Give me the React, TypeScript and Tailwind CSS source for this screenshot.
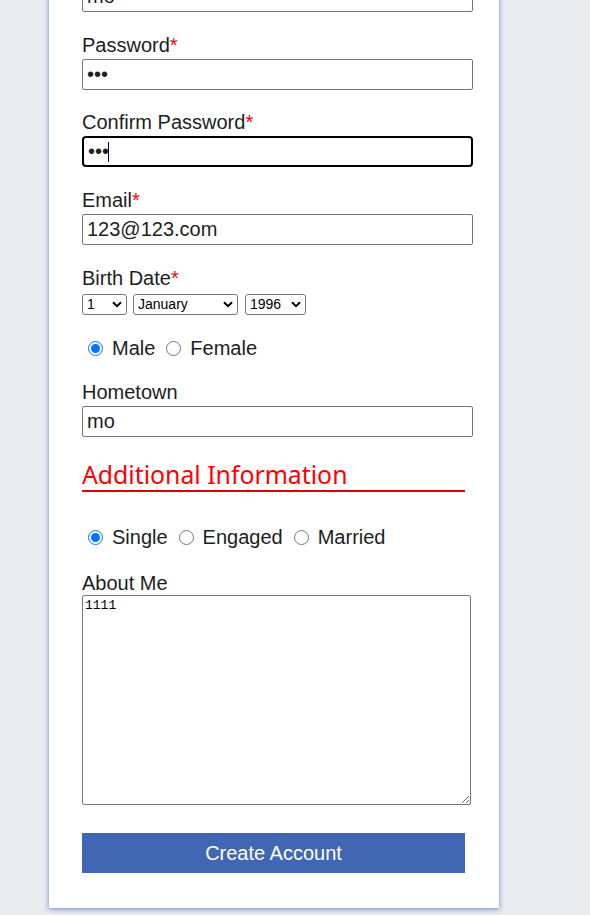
import React from "react";

const Label = ({ text, req }: { text: string; req?: boolean }) => (
  <label className="block text-[20px] leading-[23px] text-[#1c1e21]">
    {text}
    {req && <span className="text-[#ff0000]">*</span>}
  </label>
);

const inputCls =
  "block w-[391px] h-[31px] border border-[#767676] rounded-[2px] px-[4px] text-[20px] leading-[23px] text-[#1c1e21] bg-white box-border";

const Radio = ({ checked, name, label, first }: { checked?: boolean; name: string; label: string; first?: boolean }) => (
  <span className="inline-flex items-center">
    <input
      type="radio"
      name={name}
      defaultChecked={checked}
      className={`w-[15px] h-[15px] m-0 ${first ? "ml-[6px]" : "ml-[11px]"} mr-[9px] accent-[#0075ff]`}
    />
    <span className="text-[20px] leading-[23px] text-[#1c1e21]">{label}</span>
  </span>
);

const Select = ({ value, cls }: { value: string; cls: string }) => (
  <div className={`relative block h-[21px] ${cls}`}>
    <select
      className="block appearance-none w-full h-[21px] border border-[#767676] rounded-[3px] text-[14px] leading-[19px] text-black bg-white pl-[4px] pr-[18px]"
      defaultValue={value}
    >
      <option value={value}>{value}</option>
    </select>
    <svg className="absolute right-[5px] top-[7px] pointer-events-none" width="10" height="7" viewBox="0 0 10 7">
      <path d="M1 1.2 L5 5.2 L9 1.2" fill="none" stroke="#000" strokeWidth="2" />
    </svg>
  </div>
);

export default function App() {
  return (
    <div className="min-h-[915px] bg-[#e9ebee] overflow-hidden" style={{ fontFamily: '"Liberation Sans", Arial, sans-serif' }}>
      <div className="ml-[49px] w-[450px] bg-white -mt-[60px] pt-[41px] pb-[35px] pl-[33px] pr-[34px] shadow-[0_1px_5px_rgba(66,103,178,0.75)]">
        <input className={inputCls} defaultValue="mo" />

        <div className="mt-[22px]">
          <Label text="Password" req />
          <input type="password" className={`${inputCls} mt-[2px]`} defaultValue="123" />
        </div>

        <div className="mt-[21px]">
          <Label text="Confirm Password" req />
          <div className="relative mt-[2px]">
            <input type="password" className={`${inputCls} border-2 border-black rounded-[4px] px-[3px]`} defaultValue="123" />
            <span className="absolute left-[26px] top-[6px] w-[1px] h-[20px] bg-black" />
          </div>
        </div>

        <div className="mt-[22px]">
          <Label text="Email" req />
          <input className={`${inputCls} mt-[2px]`} defaultValue="123@123.com" />
        </div>

        <div className="mt-[22px]">
          <Label text="Birth Date" req />
          <div className="flex h-[21px] mt-[4px]">
            <Select value="1" cls="w-[45px]" />
            <Select value="January" cls="w-[105px] ml-[6px]" />
            <Select value="1996" cls="w-[61px] ml-[7px]" />
          </div>
        </div>

        <div className="mt-[22px] flex items-center h-[23px]">
          <Radio name="g" label="Male" checked first />
          <Radio name="g" label="Female" />
        </div>

        <div className="mt-[21px]">
          <Label text="Hometown" />
          <input className={`${inputCls} mt-[2px]`} defaultValue="mo" />
        </div>

        <h2
          className="mt-[21px] text-[24.8px] leading-[32px] text-[#ff0000] border-b-2 border-[#e00000] w-[383px]"
          style={{ fontFamily: '"Noto Sans", "Open Sans", sans-serif' }}
        >
          Additional Information
        </h2>

        <div className="mt-[34px] flex items-center h-[23px]">
          <Radio name="s" label="Single" checked first />
          <Radio name="s" label="Engaged" />
          <Radio name="s" label="Married" />
        </div>

        <div className="mt-[23px]">
          <Label text="About Me" />
          <textarea
            className="block w-[389px] h-[210px] border border-[#767676] rounded-[2px] p-[2px] text-[13px] leading-[15px] text-black bg-white"
            style={{ fontFamily: '"Liberation Mono", "DejaVu Sans Mono", monospace' }}
            defaultValue="1111"
          />
        </div>

        <button className="mt-[28px] block w-[383px] h-[40px] bg-[#4267b2] text-white text-[20px]">Create Account</button>
      </div>
    </div>
  );
}
